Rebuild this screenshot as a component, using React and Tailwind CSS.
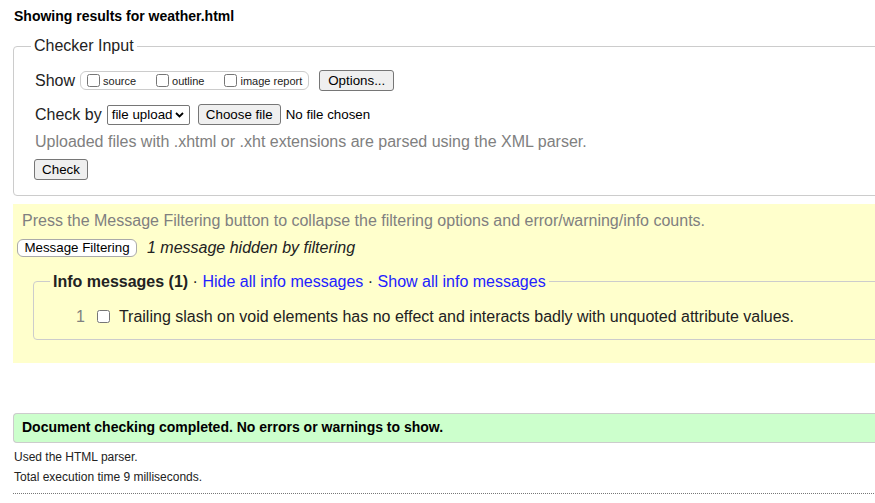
import React from 'react';

const btn =
  'inline-flex items-center justify-center rounded-[3px] border border-[#767676] bg-[#efefef] px-[7px] text-[13.333px] leading-none text-black';

function Check({ label, last }) {
  return (
    <label className={`flex items-center ${last ? '' : 'mr-[20px]'}`}>
      <input type="checkbox" className="m-0 h-[13px] w-[13px]" />
      <span className="ml-[3px] mt-[2px] text-[11px] leading-[13px]">{label}</span>
    </label>
  );
}

export default function App() {
  return (
    <div className="h-[503px] w-[875px] overflow-hidden bg-white font-['Liberation_Sans',Arial,sans-serif] text-[#222]">
      <div className="w-[1100px] pl-[13px]">
        <h1 className="pl-[1px] pt-[8px] text-[14px] font-bold leading-[16px] text-black">
          Showing results for weather.html
        </h1>

        <fieldset className="mt-[13px] rounded-[4px] border border-[#ccc] px-[17px] pb-[14px]">
          <legend className="px-[3px] text-[16px] leading-[18px]">Checker Input</legend>
          <div className="pl-[4px] text-[16px]">
            <div className="mt-[15px] flex h-[21px] items-center">
              <span>Show</span>
              <div className="ml-[5px] flex h-[19px] items-center rounded-[6px] border border-[#ccc] px-[6px]">
                <Check label="source" />
                <Check label="outline" />
                <Check label="image report" last />
              </div>
              <button type="button" className={`${btn} ml-[10px] h-[21px] w-[75px]`}>
                Options...
              </button>
            </div>

            <div className="mt-[13px] flex h-[21px] items-center">
              <span>Check by</span>
              <div className="ml-[5px] flex h-[20px] w-[83px] items-center justify-between rounded-[2px] border border-[#767676] bg-white pl-[4px] pr-[5px] text-[13.333px] text-black">
                <span>file upload</span>
                <svg width="9" height="6" viewBox="0 0 9 6" fill="none">
                  <path d="M1 1l3.5 3.5L8 1" stroke="#000" strokeWidth="1.8" />
                </svg>
              </div>
              <button type="button" className={`${btn} ml-[8px] h-[21px] w-[83px]`}>
                Choose file
              </button>
              <span className="ml-[5px] text-[13.333px] text-black">No file chosen</span>
            </div>

            <p className="mt-[7px] text-[16px] leading-[20px] text-[#808080]">
              Uploaded files with .xhtml or .xht extensions are parsed using the XML parser.
            </p>

            <button type="button" className={`${btn} -ml-[1px] mt-[7px] h-[21px] w-[54px]`}>
              Check
            </button>
          </div>
        </fieldset>

        <div className="mt-[8px] bg-[#ffffcc] pb-[23px] pl-[9px] pt-[8px]">
          <p className="text-[16px] leading-[18px] text-[#808080]">
            Press the Message Filtering button to collapse the filtering options and error/warning/info counts.
          </p>
          <div className="mt-[9px] flex h-[18px] items-center">
            <button
              type="button"
              className="-ml-[5px] flex h-[18px] w-[120px] items-center justify-center rounded-[6px] border border-[#aaa] bg-white text-[13.333px] leading-none text-black"
            >
              Message Filtering
            </button>
            <span className="ml-[10px] text-[16px] italic">1 message hidden by filtering</span>
          </div>

          <fieldset className="ml-[11px] mt-[16px] rounded-[4px] border border-[#ccc] px-[16px] pb-[12px]">
            <legend className="px-[3px] text-[16px] leading-[18px]">
              <span className="font-bold">Info messages (1)</span>
              <span> · </span>
              <a className="text-[#2222ff]">Hide all info messages</a>
              <span> · </span>
              <a className="text-[#2222ff]">Show all info messages</a>
            </legend>
            <div className="mt-[16px] flex h-[20px] items-center text-[16px]">
              <span className="ml-[26px] text-[#808080]">1</span>
              <input type="checkbox" className="m-0 ml-[12px] h-[13px] w-[13px]" />
              <span className="ml-[9px]">
                Trailing slash on void elements has no effect and interacts badly with unquoted attribute values.
              </span>
            </div>
          </fieldset>
        </div>

        <div className="mt-[50px] flex h-[30px] items-center rounded-l-[4px] border border-r-0 border-[#ccc] bg-[#ccffcc] pl-[8px] text-[14px] font-bold text-black">
          Document checking completed. No errors or warnings to show.
        </div>

        <p className="mt-[7px] pl-[1px] text-[12px] leading-[14px]">Used the HTML parser.</p>
        <p className="mt-[6px] pl-[1px] text-[12px] leading-[14px]">Total execution time 9 milliseconds.</p>
        <div className="mt-[9px] border-t border-dotted border-[#777]" />
      </div>
    </div>
  );
}
